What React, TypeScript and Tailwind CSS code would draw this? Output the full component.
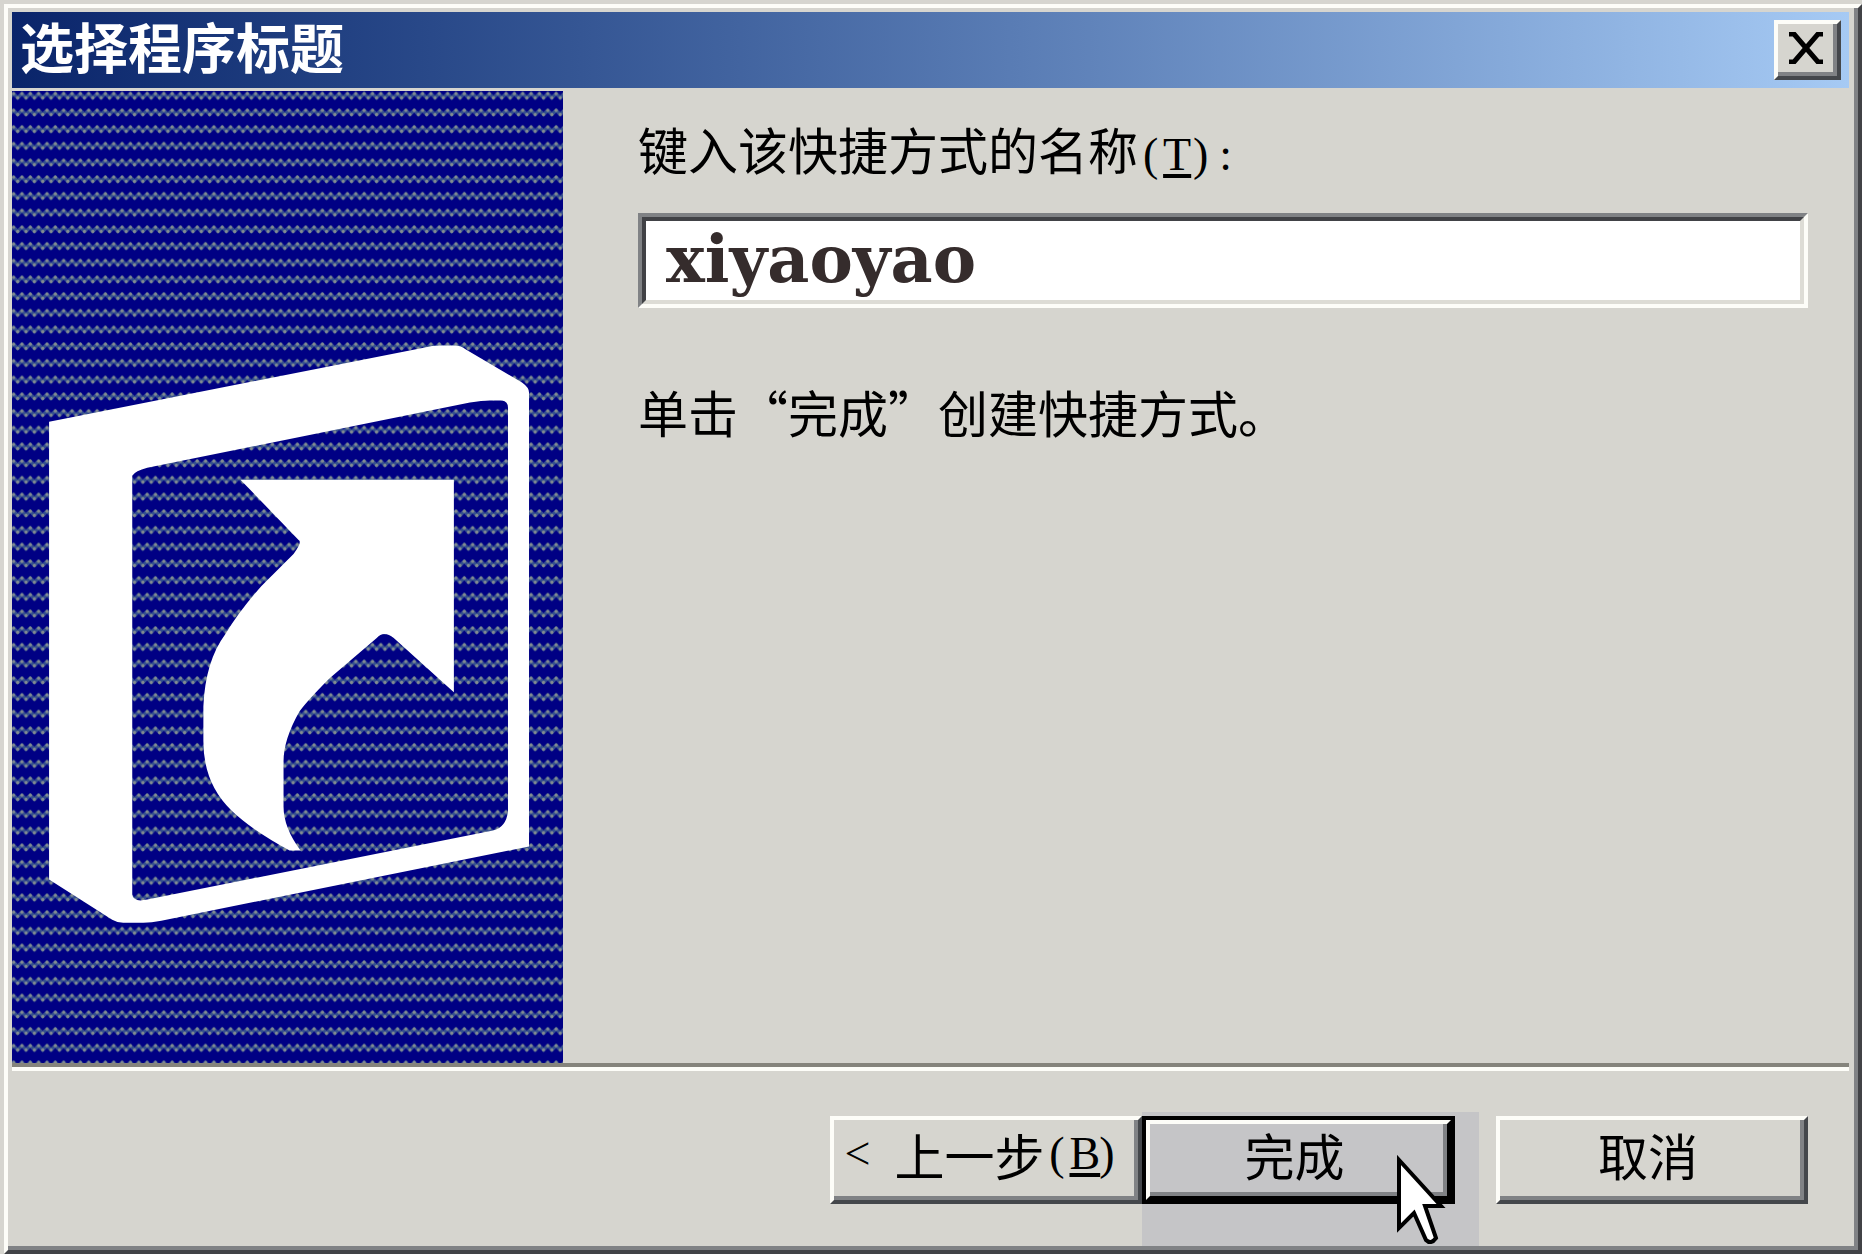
import type { ButtonHTMLAttributes, ReactNode } from 'react';

const RAISED = 'border-4 border-t-[#fdfdf8] border-l-[#fdfdf8] border-r-[#44474b] border-b-[#44474b]';
const RAISED_INNER = 'shadow-[inset_-4px_-4px_0_#808285]';

// Half-width character cell, as in a bitmap dialog font
function Cell({ children }: { children: ReactNode }) {
  return (
    <span className="inline-block w-[25px] text-center font-['Liberation_Serif',serif] text-[46px] leading-none">
      {children}
    </span>
  );
}

function AccessKey({ char }: { char: string }) {
  return (
    <>
      <Cell>(</Cell>
      <Cell>
        <span className="underline decoration-4 underline-offset-4">{char}</span>
      </Cell>
      <Cell>)</Cell>
    </>
  );
}

function DialogButton({ children, className = '', ...rest }: ButtonHTMLAttributes<HTMLButtonElement>) {
  return (
    <button
      type="button"
      className={`flex h-[88px] w-[312px] items-center justify-center pr-2 pb-3 whitespace-nowrap ${RAISED} ${RAISED_INNER} ${className}`}
      {...rest}
    >
      {children}
    </button>
  );
}

function ShortcutBanner() {
  return (
    <svg
      className="absolute inset-0 h-full w-full"
      viewBox="13 91 550 972"
      preserveAspectRatio="xMinYMin slice"
      aria-hidden="true"
    >
      <defs>
        <pattern id="weave" x="12.5" y="91.5" width="8.33" height="16.67" patternUnits="userSpaceOnUse">
          <rect width="8.33" height="16.67" fill="#000084" />
          <path d="M-2.1 6.3 L2.1 2.1 L6.2 6.3 L10.4 2.1" fill="none" stroke="#36508e" strokeWidth="3.4" />
          <circle cx="2.1" cy="2.1" r="1.6" fill="#838c90" />
          <circle cx="6.2" cy="6.3" r="1.6" fill="#838c90" />
        </pattern>
      </defs>
      <rect x="13" y="91" width="550" height="972" fill="url(#weave)" />
      <path
        fill="#fff"
        fillRule="evenodd"
        d="M50 421 L425 347 Q432 345 440 345 H455 Q461 345 466 349 L522 382 Q529 387 529 392 V845 L162 919 Q152 921 144 921 H124 Q118 921 113 918 L50 878 Z
           M133 475 Q136 470 148 467 L470 402 Q482 400 490 400 H502 Q508 401 508 407 V810 Q506 826 493 829 L148 898 Q134 901 133 893 Z"
      />
      <path
        fill="#fff"
        d="M241 479 H454 V691 L394 637 Q384 629 377 637 L330 677 Q308 699 300 710 Q284 738 284 760 V805 Q284 826 301 849 H290 Q253 829 232 809 Q204 782 204 740 V705 Q206 660 226 633 Q239 611 262 585 L294 553 Q303 541 299 539 Z"
      />
    </svg>
  );
}

function Pointer() {
  return (
    <svg className="pointer-events-none absolute top-[43px] left-[253px] h-[92px] w-[60px]" viewBox="0 0 60 92" aria-hidden="true">
      <path
        d="M4 5 V73 L19 58 L31 85 Q36 90 41 83 L30 51 H46 Z"
        fill="#fff"
        stroke="#000"
        strokeWidth="4"
      />
    </svg>
  );
}

export default function App() {
  return (
    <div
      lang="zh-CN"
      className="min-h-screen bg-[#d6d5cf] pt-1 pl-1 font-['Noto_Sans_CJK_SC',sans-serif] text-[50px] leading-none text-black"
    >
      <div className="flex min-h-[calc(100vh-4px)] flex-col border-4 border-t-[#fdfdf8] border-l-[#fdfdf8] border-r-[#414246] border-b-[#414246] p-1 pr-[9px] shadow-[inset_-4px_-4px_0_#808285]">
        <header className="flex h-[76px] items-center justify-between bg-linear-to-r from-[#0a246a] to-[#a6caf4] px-2">
          <h1 className="pb-2 text-[54px] leading-none font-bold text-white">选择程序标题</h1>
          <button
            type="button"
            aria-label="关闭"
            className={`flex h-[60px] w-[67px] items-center justify-center bg-[#d6d5cf] pr-1 pb-1 ${RAISED} ${RAISED_INNER}`}
          >
            <svg className="h-8 w-9" viewBox="0 0 36 32" aria-hidden="true">
              <path d="M1 2 H6 L30 30 H35 M35 2 H30 L6 30 H1" fill="none" stroke="#000" strokeWidth="5" />
            </svg>
          </button>
        </header>

        <main className="mt-[3px] flex flex-1">
          <aside className="relative w-[30%] shrink-0 overflow-hidden bg-[#000084]">
            <ShortcutBanner />
          </aside>
          <section className="flex flex-1 flex-col pt-8 pr-[41px] pl-[75px]">
            <label htmlFor="shortcut-name" className="h-[50px] whitespace-nowrap">
              键入该快捷方式的名称
              <AccessKey char="T" />
              <Cell>:</Cell>
            </label>
            <div className="mt-10 border-4 border-t-[#808285] border-l-[#808285] border-r-[#fdfdf8] border-b-[#fdfdf8]">
              <input
                id="shortcut-name"
                type="text"
                defaultValue="xiyaoyao"
                className="block h-[87px] w-full border-4 border-t-[#414246] border-l-[#414246] border-r-[#dddcd5] border-b-[#dddcd5] bg-white px-5 pb-1 font-['DejaVu_Serif',serif] text-[65px] leading-none font-bold text-[#352c2c] outline-none"
              />
            </div>
            <p className="mt-[78px] whitespace-nowrap">单击“完成”创建快捷方式。</p>
          </section>
        </main>

        <footer className="border-t-4 border-[#85847c]">
          <div className="flex justify-end border-t-4 border-[#fdfdf8] pr-[41px]">
            <div className="pt-[45px]">
              <DialogButton>
                <Cell>&lt;</Cell>
                <Cell>&nbsp;</Cell>
                上一步
                <AccessKey char="B" />
              </DialogButton>
            </div>
            <div className="relative mt-[41px] mr-[17px] h-[134px] w-[337px] bg-[#c5c5c7] pt-1">
              <div className="w-[313px] border-4 border-black">
                <button
                  type="button"
                  className="flex h-20 w-full items-center justify-center border-4 border-t-[#fdfdf8] border-l-[#fdfdf8] border-r-black border-b-black pr-2 pb-3 shadow-[inset_-4px_-4px_0_#808285]"
                >
                  完成
                </button>
              </div>
              <Pointer />
            </div>
            <div className="pt-[45px]">
              <DialogButton>取消</DialogButton>
            </div>
          </div>
        </footer>
      </div>
    </div>
  );
}
